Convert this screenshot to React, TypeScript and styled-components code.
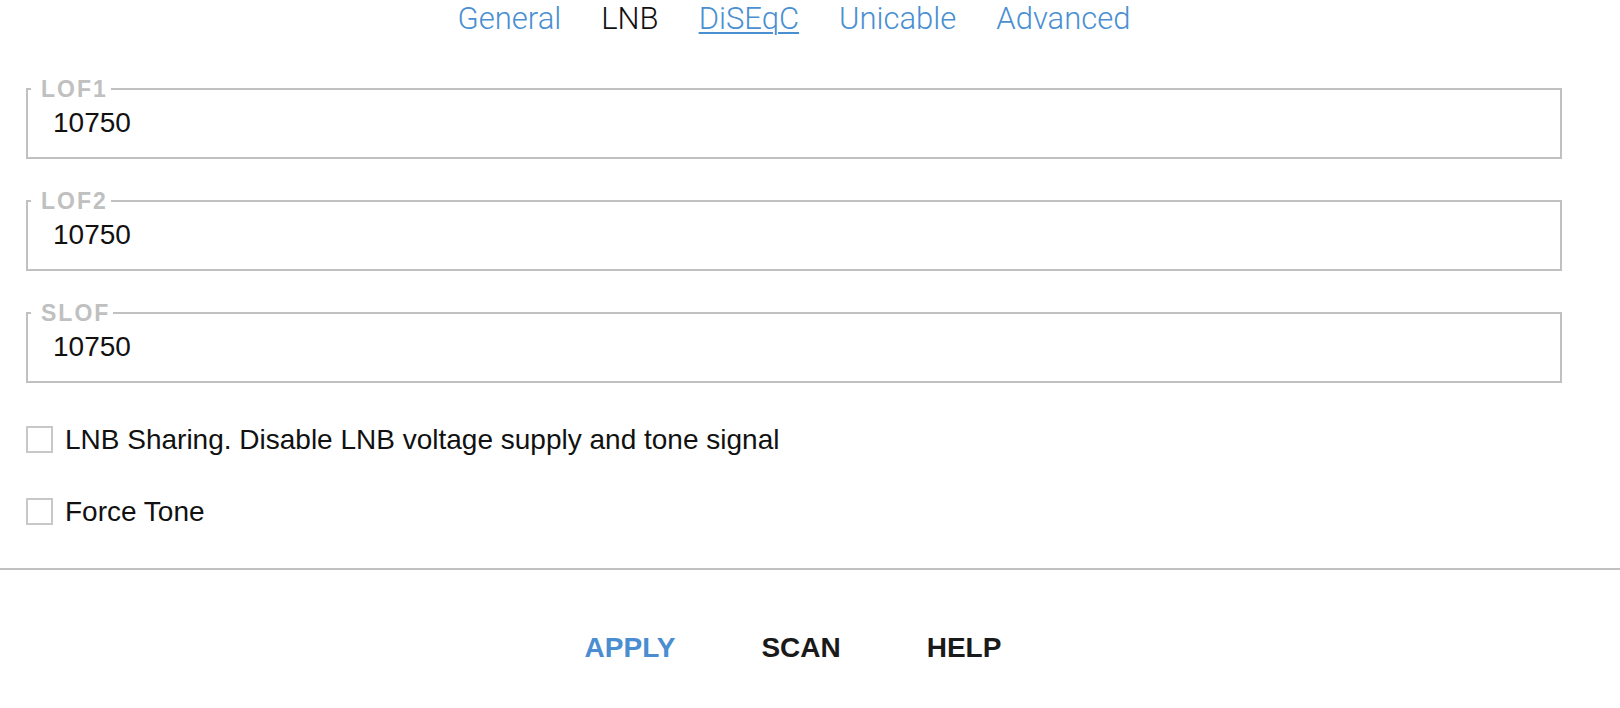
import { useState } from 'react';
import styled, { createGlobalStyle } from 'styled-components';

const GlobalStyle = createGlobalStyle`
  body {
    margin: 0;
    background: #fff;
    font-family: "Liberation Sans", Arial, sans-serif;
    color: #111;
  }
`;

const Page = styled.div`
  display: flex;
  flex-direction: column;
`;

const TabBar = styled.nav`
  display: flex;
  justify-content: center;
  gap: 40px;
  height: 38px;
  padding-right: 32px;
`;

const Tab = styled.a<{ $active?: boolean; $underline?: boolean }>`
  font-family: Roboto, "Liberation Sans", sans-serif;
  font-weight: 300;
  font-size: 31px;
  line-height: 38px;
  color: ${(p) => (p.$active ? '#111' : '#4a8fd1')};
  text-decoration: ${(p) => (p.$underline ? 'underline' : 'none')};
  text-underline-offset: 3px;
  text-decoration-thickness: 2px;
  cursor: pointer;
`;

const Form = styled.div`
  display: flex;
  flex-direction: column;
  gap: 30px;
  padding: 39px 58px 0 26px;
`;

const Field = styled.fieldset`
  margin: 0;
  min-width: 0;
  padding: 7px 0 19px 3px;
  border: 2px solid #c0c0c0;
`;

const Legend = styled.legend`
  padding: 0 3px 0 10px;
  font-size: 23px;
  line-height: 24px;
  font-weight: 700;
  letter-spacing: 2px;
  color: #c0c0c0;
`;

const ValueInput = styled.input`
  display: block;
  width: 100%;
  box-sizing: border-box;
  height: 30px;
  padding: 0 0 0 22px;
  border: none;
  outline: none;
  background: transparent;
  font-family: "Liberation Sans", Arial, sans-serif;
  font-size: 28px;
  line-height: 30px;
  color: #111;
`;

const Options = styled.div`
  display: flex;
  flex-direction: column;
  gap: 45px;
  padding: 43px 0 43px 26px;
`;

const CheckRow = styled.label`
  display: flex;
  align-items: center;
  gap: 12px;
  font-size: 28px;
  line-height: 32px;
  height: 27px;
  cursor: pointer;
`;

const Box = styled.span<{ $checked: boolean }>`
  width: 27px;
  height: 27px;
  box-sizing: border-box;
  border: 2px solid #c8c8c8;
  background: ${(p) => (p.$checked ? '#4a8fd1' : '#fff')};
  flex: none;
`;

const Footer = styled.div`
  display: flex;
  justify-content: center;
  gap: 86px;
  border-top: 2px solid #c0c0c0;
  padding: 62px 34px 0 0;
`;

const ActionButton = styled.button<{ $primary?: boolean }>`
  padding: 0;
  border: none;
  background: none;
  font-family: "Liberation Sans", Arial, sans-serif;
  font-weight: 700;
  font-size: 28px;
  line-height: 32px;
  color: ${(p) => (p.$primary ? '#4a8dd0' : '#1a1a1a')};
  cursor: pointer;
`;

const tabs = ['General', 'LNB', 'DiSEqC', 'Unicable', 'Advanced'];
const fields = ['LOF1', 'LOF2', 'SLOF'];

function App() {
  const [values, setValues] = useState<Record<string, string>>({
    LOF1: '10750',
    LOF2: '10750',
    SLOF: '10750',
  });
  const [sharing, setSharing] = useState(false);
  const [forceTone, setForceTone] = useState(false);

  return (
    <Page>
      <GlobalStyle />
      <TabBar>
        {tabs.map((t) => (
          <Tab key={t} $active={t === 'LNB'} $underline={t === 'DiSEqC'}>
            {t}
          </Tab>
        ))}
      </TabBar>
      <Form>
        {fields.map((f) => (
          <Field key={f}>
            <Legend>{f}</Legend>
            <ValueInput
              value={values[f]}
              onChange={(e) => setValues({ ...values, [f]: e.target.value })}
            />
          </Field>
        ))}
      </Form>
      <Options>
        <CheckRow onClick={() => setSharing(!sharing)}>
          <Box $checked={sharing} />
          LNB Sharing. Disable LNB voltage supply and tone signal
        </CheckRow>
        <CheckRow onClick={() => setForceTone(!forceTone)}>
          <Box $checked={forceTone} />
          Force Tone
        </CheckRow>
      </Options>
      <Footer>
        <ActionButton $primary>APPLY</ActionButton>
        <ActionButton>SCAN</ActionButton>
        <ActionButton>HELP</ActionButton>
      </Footer>
    </Page>
  );
}

export default App;
